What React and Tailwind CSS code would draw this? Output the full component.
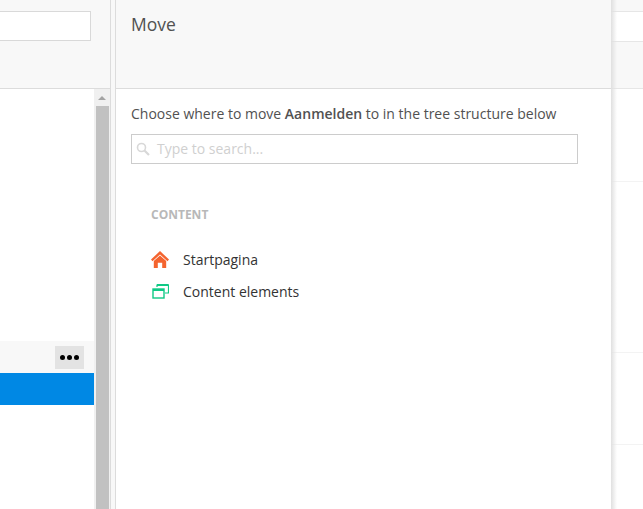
import React from 'react';

function HomeIcon() {
  return (
    <svg width="18" height="17" viewBox="0 0 18 17" className="shrink-0">
      <path d="M9 0 L18 8.6 L16.5 10.3 L9 3.4 L1.5 10.3 L0 8.6 Z" fill="#f4642f" />
      <path d="M2.8 10 L9 4.6 L15.2 10 V17 H11.2 V11.8 H6.8 V17 H2.8 Z" fill="#f4642f" />
    </svg>
  );
}

function ElementsIcon() {
  return (
    <svg width="17" height="15" viewBox="0 0 17 15" fill="none" stroke="#0fc985" className="ml-[1px] shrink-0">
      <path d="M5 3 V1 H16.5 V9 H13" strokeWidth="1.2" />
      <path d="M5 1 H16.5" strokeWidth="2" />
      <rect x="1" y="5" width="11" height="9" strokeWidth="1.4" />
      <path d="M1 6 H12" strokeWidth="2" />
    </svg>
  );
}

function SearchIcon() {
  return (
    <svg width="14" height="14" viewBox="0 0 14 14" fill="none" stroke="#d8d8d8" className="shrink-0">
      <circle cx="5.5" cy="5.5" r="4" strokeWidth="1.6" />
      <path d="M8.5 8.5 L13 13" strokeWidth="2.2" />
    </svg>
  );
}

function TreeItem({ icon, label }) {
  return (
    <div className="flex items-center h-[32px]">
      <div className="w-[32px] flex items-center">{icon}</div>
      <span className="text-[14px] text-[#333]">{label}</span>
    </div>
  );
}

export default function App() {
  return (
    <div className="flex w-[643px] h-[509px] overflow-hidden bg-white font-['Open_Sans',sans-serif]">
      {/* list behind the dialog */}
      <div className="w-[110px] shrink-0 flex flex-col">
        <div className="h-[89px] shrink-0 bg-[#f8f8f8] border-b border-[#dcdcdc] pt-[11px] pr-[19px]">
          <div className="h-[30px] bg-white border border-l-0 border-[#d9d9d9]" />
        </div>
        <div className="flex-1 flex min-h-0">
          <div className="w-[94px] flex flex-col">
            <div className="h-[252px] shrink-0" />
            <div className="h-[32px] shrink-0 bg-[#f8f8f8] flex justify-end items-center pr-[10px]">
              <div className="w-[29px] h-[23px] bg-[#e3e3e3] flex items-center justify-center gap-[2px]">
                <span className="w-[5px] h-[5px] rounded-full bg-black" />
                <span className="w-[5px] h-[5px] rounded-full bg-black" />
                <span className="w-[5px] h-[5px] rounded-full bg-black" />
              </div>
            </div>
            <div className="h-[32px] shrink-0 bg-[#0088e4]" />
          </div>
          <div className="w-[16px] bg-[#f0f0f0] flex flex-col items-center">
            <div className="h-[17px] shrink-0 flex items-center justify-center">
              <div className="w-0 h-0 border-x-[4px] border-x-transparent border-b-[4px] border-b-[#a3a3a3]" />
            </div>
            <div className="flex-1 w-[13px] bg-[#c1c1c1]" />
          </div>
        </div>
      </div>

      {/* gutter */}
      <div className="w-[6px] shrink-0 border-x border-[#dcdcdc] bg-[#f8f8f8]" />

      {/* move dialog */}
      <div className="w-[495px] shrink-0 flex flex-col">
        <div className="h-[89px] shrink-0 bg-[#f8f8f8] border-b border-[#dcdcdc] pl-[15px] pt-[11px]">
          <h1 className="text-[17.5px] leading-[26px] text-[#515151]">Move</h1>
        </div>
        <div className="flex-1 pl-[15px] pt-[15px]">
          <p className="text-[14px] leading-[20px] text-[#515151]">
            Choose where to move <b className="font-semibold">Aanmelden</b> to in the tree structure below
          </p>
          <div className="mt-[10px] w-[447px] h-[30px] border border-[#cccccc] flex items-center pl-[4px] gap-[7px]">
            <SearchIcon />
            <span className="text-[14px] text-[#d0d0d0] -mt-[2px]">Type to search...</span>
          </div>
          <div className="pl-[20px] pt-[43px]">
            <div className="text-[12px] leading-[16px] font-bold text-[#b8b8b8]">CONTENT</div>
            <div className="mt-[20px]">
              <TreeItem icon={<HomeIcon />} label="Startpagina" />
              <TreeItem icon={<ElementsIcon />} label="Content elements" />
            </div>
          </div>
        </div>
      </div>

      {/* what shows to the right of the dialog */}
      <div className="flex-1 flex flex-col relative">
        <div className="h-[12px] shrink-0 bg-[#f8f8f8] border-b border-[#e6e6e6]" />
        <div className="h-[29px] shrink-0 bg-white" />
        <div className="h-[48px] shrink-0 bg-[#f8f8f8] border-y border-[#e6e6e6]" />
        <div className="h-[93px] shrink-0 border-b border-[#f3f3f3]" />
        <div className="h-[171px] shrink-0 border-b border-[#f3f3f3]" />
        <div className="h-[92px] shrink-0 border-b border-[#f3f3f3]" />
        <div className="absolute inset-y-0 left-0 w-[6px] bg-gradient-to-r from-[#e0e0e0] to-transparent" />
      </div>
    </div>
  );
}
